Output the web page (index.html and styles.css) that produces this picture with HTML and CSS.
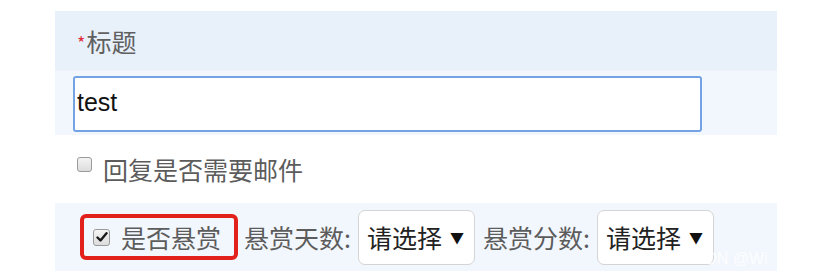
FILE: index.html
```html
<!DOCTYPE html>
<html lang="zh-CN">
<head>
<meta charset="utf-8">
<link rel="stylesheet" href="styles.css">
</head>
<body>
<div class="panel">
  <div class="row head"><span class="req">*</span>标题</div>
  <div class="row light">
    <input class="title-input" type="text" value="test">
  </div>
  <div class="row plain">
    <span class="cb"></span>
    <span class="label">回复是否需要邮件</span>
  </div>
  <div class="row light reward">
    <div class="hl">
      <span class="cb checked"><svg viewBox="0 0 12 12" width="12" height="12"><path d="M1.5 6.5 L4.5 9.5 L10.5 2.2" fill="none" stroke="#1a1a1a" stroke-width="2.4" stroke-linecap="round" stroke-linejoin="round"/></svg></span>
      <span class="label">是否悬赏</span>
    </div>
    <span class="label days">悬赏天数:</span>
    <div class="sel"><span>请选择</span><span class="arrow">▼</span></div>
    <span class="label pts">悬赏分数:</span>
    <div class="sel"><span>请选择</span><span class="arrow">▼</span></div>
    <span class="wm">CSDN @Wi</span>
  </div>
</div>
</body>
</html>
```
FILE: styles.css
```css
html, body {
  margin: 0;
  padding: 0;
  background: #ffffff;
}
body {
  font-family: "Noto Sans CJK SC", "Liberation Sans", sans-serif;
  color: #555555;
}
.panel {
  margin: 11px 0 0 55px;
  width: 722px;
}
.row {
  display: flex;
  align-items: center;
  box-sizing: border-box;
}
.head {
  height: 60px;
  background: #e8f0fa;
  padding-left: 22px;
  font-size: 25px;
  color: #606060;
  border-bottom: 1px solid #eef3fb;
}
.req {
  color: #e0303a;
  font-size: 18px;
  align-self: flex-start;
  margin-top: 18px;
  margin-right: 1px;
}
.light {
  background: #f2f7fd;
}
.row.light:nth-child(2) {
  height: 64px;
  align-items: flex-start;
  padding-top: 5px;
}
.title-input {
  margin-left: 18px;
  width: 629px;
  height: 56px;
  box-sizing: border-box;
  border: 2px solid #73a3e2;
  border-radius: 3px;
  background: #ffffff;
  font-family: "Liberation Sans", Arial, sans-serif;
  font-size: 25px;
  color: #111111;
  padding: 0 2px 4px;
  outline: none;
}
.plain {
  height: 68px;
  padding-left: 22px;
}
.cb {
  display: inline-flex;
  align-items: center;
  justify-content: center;
  width: 15px;
  height: 15px;
  box-sizing: border-box;
  border: 1px solid #9a9a9a;
  border-radius: 3px;
  background: linear-gradient(#f4f4f4, #dcdcdc);
}
.plain .cb {
  margin-right: 11px;
  margin-top: -10px;
}
.label {
  font-size: 25px;
  color: #5c5c5c;
  line-height: 1;
}
.reward {
  height: 68px;
  position: relative;
  overflow: hidden;
}
.hl {
  display: flex;
  align-items: center;
  margin-left: 25px;
  width: 158px;
  height: 46px;
  box-sizing: border-box;
  border: 4px solid #e3211c;
  border-radius: 6px;
  padding-left: 9px;
}
.hl .cb {
  width: 17px;
  height: 17px;
  margin-right: 11px;
}
.days {
  margin-left: 6px;
}
.sel {
  display: flex;
  align-items: center;
  margin-left: 7px;
  width: 117px;
  height: 55px;
  box-sizing: border-box;
  border: 1px solid #d4d4d4;
  border-radius: 7px;
  background: #ffffff;
  padding-left: 8px;
  font-size: 25px;
  color: #222222;
}
.arrow {
  font-size: 14px;
  margin-left: 8px;
  color: #111;
}
.pts {
  margin-left: 8px;
}
.wm {
  position: absolute;
  left: 628px;
  bottom: 3px;
  font-family: "Liberation Sans", Arial, sans-serif;
  font-size: 16px;
  color: rgba(255, 255, 255, 0.8);
  white-space: nowrap;
}
```
